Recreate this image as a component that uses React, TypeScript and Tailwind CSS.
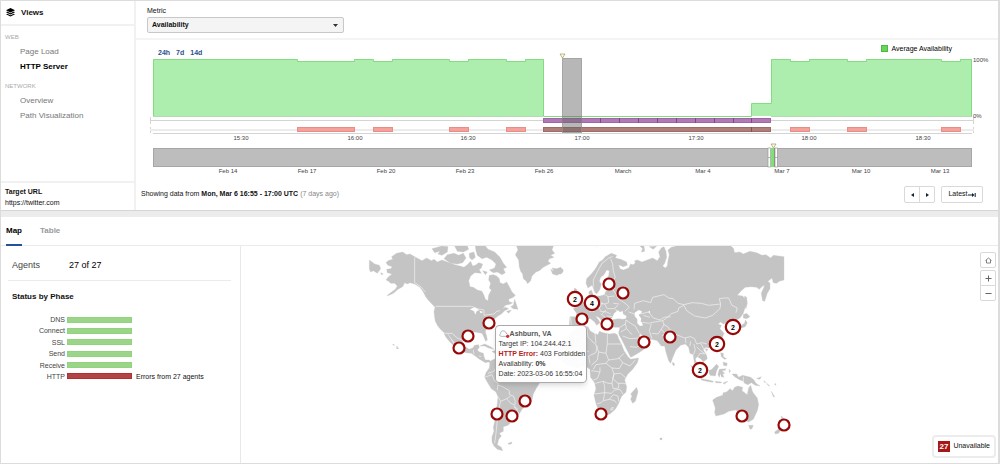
import { useState } from 'react';
import clsx from 'clsx';

const views = [
  { title: 'WEB', items: ['Page Load', 'HTTP Server'] },
  { title: 'NETWORK', items: ['Overview', 'Path Visualization'] },
];

const phases = [
  { name: 'DNS', error: '' },
  { name: 'Connect', error: '' },
  { name: 'SSL', error: '' },
  { name: 'Send', error: '' },
  { name: 'Receive', error: '' },
  { name: 'HTTP', error: 'Errors from 27 agents' },
];

const hours = [
  { x: 105, label: '15:30' },
  { x: 219, label: '16:00' },
  { x: 332, label: '16:30' },
  { x: 446, label: '17:00' },
  { x: 560, label: '17:30' },
  { x: 673, label: '18:00' },
  { x: 787, label: '18:30' },
];

const days = [
  { x: 92, label: 'Feb 14' },
  { x: 171, label: 'Feb 17' },
  { x: 250, label: 'Feb 20' },
  { x: 329, label: 'Feb 23' },
  { x: 408, label: 'Feb 26' },
  { x: 487, label: 'March' },
  { x: 567, label: 'Mar 4' },
  { x: 646, label: 'Mar 7' },
  { x: 725, label: 'Mar 10' },
  { x: 804, label: 'Mar 13' },
];

const alerts = [
  [161, 57],
  [237, 19],
  [313, 19],
  [370, 19],
  [654, 19],
  [711, 19],
  [805, 19],
];

const markers = [
  { x: 248, y: 76 },
  { x: 227, y: 89 },
  { x: 218, y: 101 },
  { x: 284, y: 154 },
  { x: 256, y: 167 },
  { x: 271, y: 169 },
  { x: 368, y: 37 },
  { x: 382, y: 46 },
  { x: 341, y: 72 },
  { x: 366, y: 77 },
  { x: 403, y: 95 },
  { x: 429, y: 90 },
  { x: 360, y: 167 },
  { x: 501, y: 169 },
  { x: 543, y: 178 },
  { x: 334, y: 52, count: 2 },
  { x: 351, y: 56, count: 4 },
  { x: 492, y: 80, count: 2 },
  { x: 476, y: 97, count: 2 },
  { x: 459, y: 123, count: 2 },
];

const americas = [
  // mainland
  'M164 50L150 42 140 44 128 36 110 40 95 50 98 58 84 62 78 68 84 76 97 80 92 86 80 88 82 98 96 102 84 112 78 120 86 124 92 130 104 130 112 138 106 148 84 164 82 168 100 160 114 148 128 140 134 128 142 132 150 128 164 132 180 142 190 156 198 172 208 184 218 194 225 202 222 215 224 232 226 244 232 256 240 266 250 276 258 292 268 304 278 314 282 312 272 296 264 284 262 279 270 290 282 306 290 320 300 332 318 338 334 340 346 348 356 356 366 362 376 368 384 366 394 368 388 360 376 360 372 350 370 340 358 336 352 330 358 322 356 314 344 316 338 324 328 328 316 320 308 306 306 296 308 290 318 282 330 276 345 276 356 278 366 280 372 292 377 304 382 300 380 288 376 276 380 262 394 248 402 238 414 228 424 222 434 212 446 206 436 202 428 206 436 196 452 192 458 188 448 186 446 178 460 172 466 166 456 156 448 140 440 126 430 132 420 128 418 116 410 108 400 104 388 106 386 120 392 130 388 144 394 150 386 166 384 182 376 178 372 166 366 154 352 150 340 142 330 140 326 122 332 108 344 98 352 92 364 84 368 72 356 68 346 76 338 78 332 64 322 74 312 82 300 78 284 74 262 66 246 60 232 66 222 58 214 62 200 54 186 62Z',
  'M216 26L232 22 246 18 264 20 262 36 246 46 234 42 240 34 224 38Z',
  'M252 56L262 44 282 40 296 46 310 40 318 54 308 68 292 72 272 70Z',
  'M284 18L322 18 326 28 310 36 292 34Z M328 40L342 36 346 52 336 60 328 52Z',
  'M346 18L376 18 384 28 404 36 420 52 430 70 440 82 430 86 436 98 426 104 412 96 400 98 388 90 404 84 408 72 396 60 380 52 366 56 352 46 348 32Z',
  'M338 84L356 86 364 100 346 98Z M368 92L382 96 376 104Z',
  'M464 178L474 208 460 206 452 200 460 196Z M440 214L454 210 446 220Z',
  'M28 60L44 72 58 76 62 86 52 100 40 92 32 96 28 88Z M62 98L70 102 64 104Z',
  'M360 318L374 312 392 320 402 328 386 324 374 318Z M396 334L412 330 420 336 404 340Z',
  'M110 318L116 326 110 326Z M100 312L104 316 98 315Z',
  // greenland and iceland
  'M470 18L474 30 466 44 476 60 478 80 482 94 488 102 490 116 498 122 503 131 512 122 516 108 528 96 538 92 550 82 572 70 564 64 568 56 582 52 572 46 584 40 576 30 580 18Z',
  'M572 88L582 94 576 84 590 86 602 82 610 90 604 100 590 106 578 102Z',
  // south america
  'M390 364L388 384 378 398 374 412 384 430 394 446 408 456 414 470 412 490 408 520 404 545 400 562 402 574 396 590 396 606 402 618 412 628 428 632 424 622 412 614 416 598 424 588 418 580 430 574 430 560 444 556 450 550 446 544 460 540 468 534 478 522 486 508 494 500 508 496 516 480 520 462 528 446 538 430 534 412 500 400 484 384 450 366 410 354Z',
  'M444 610L456 606 454 612 446 613Z',
];

const eastern = [
  // europe and asia
  'M78 130L80 116 96 100 108 84 118 66 128 60 136 50 154 40 170 46 166 54 182 58 200 66 202 76 190 80 176 74 180 86 190 90 206 84 212 72 220 74 226 68 224 62 232 60 246 66 262 60 278 54 292 62 300 50 296 36 304 24 312 20 318 34 320 52 314 70 308 78 316 84 322 78 324 62 328 44 324 30 334 22 350 18 512 18 520 24 524 38 540 36 550 42 570 34 590 38 606 46 618 44 632 54 640 46 672 50 672 120 658 124 650 130 640 128 636 114 624 124 630 130 630 146 622 160 614 184 608 182 604 160 610 146 614 136 608 138 598 148 590 142 574 140 556 142 544 152 532 166 548 168 556 178 556 200 550 220 540 234 526 242 524 252 532 266 526 276 516 268 512 256 504 246 490 252 482 246 474 252 484 256 480 266 492 280 486 296 476 308 462 318 446 324 436 322 430 330 440 346 442 356 430 366 422 356 412 350 406 356 410 370 418 386 424 398 416 396 406 380 402 362 400 344 390 340 386 322 376 312 362 316 348 330 340 348 332 370 326 362 318 336 314 318 304 318 292 302 276 298 262 300 250 290 240 280 238 288 246 300 258 302 266 312 254 326 240 336 220 348 212 352 206 340 196 320 186 300 178 286 176 278 180 262 164 262 150 260 148 252 154 240 174 236 188 238 198 236 200 228 190 222 188 212 180 216 174 210 162 220 156 234 148 240 142 246 144 256 138 262 130 246 116 232 106 228 116 240 120 248 110 256 104 246 92 236 84 236 74 242 66 252 58 262 40 262 28 256 30 230 48 230 50 220 40 206 56 198 70 186 84 178 90 168 86 156 94 150 98 160 100 168 120 168 134 164 136 156 144 150 160 146 150 144 138 144 132 132 136 118 146 108 148 92 140 90 132 104 122 112 118 124 124 132 120 148 110 162 104 156 100 144 96 136 84 144Z',
  // africa
  'M20 300L34 274 60 262 84 260 90 272 102 280 114 284 118 274 130 278 148 282 164 280 172 284 176 296 184 312 192 332 204 350 212 358 236 354 232 368 218 388 202 404 194 420 200 440 198 456 184 470 176 490 166 508 150 522 136 526 124 528 116 512 108 490 102 466 108 446 104 428 92 412 90 388 76 378 50 384 20 376 -10 350 -8 320Z',
  'M212 462L230 442 234 456 226 484 218 490 212 478 216 468Z',
  'M42 196L48 178 40 158 44 144 50 148 56 170 64 188 60 196Z M28 186L28 172 38 170 38 184Z',
  'M110 18L112 18Z M240 18L252 18 254 34 244 36 248 26Z M268 20L290 18 280 28Z M0 86L10 92 6 100 0 102Z',
  // east asian islands
  'M554 168L560 172 562 190 558 206 554 194Z M550 224L560 220 570 230 560 236 550 234Z M556 240L562 248 556 260 544 264 530 272 526 268 544 256 554 250Z M520 272L530 272 528 282 522 280Z',
  'M480 324L488 318 486 332Z M436 326L444 328 440 334Z M482 338L490 340 490 350 500 356 494 358 484 350Z M490 366L502 370 500 378 490 376Z M338 366L344 372 342 378 338 374Z',
  'M446 392L456 388 470 372 476 380 470 392 466 408 450 406Z M392 376L406 386 426 406 426 416 416 410 400 392Z M424 416L446 420 460 424 458 427 440 424 424 420Z M466 424L484 426 484 429 468 428Z M490 428L504 424 492 433Z',
  'M478 388L498 386 496 391 486 392 494 400 488 402 492 412 484 410 482 400 478 412 474 404Z M508 388L512 394 508 398Z',
  'M516 402L530 402 536 412 548 406 572 412 582 420 588 430 600 438 586 436 574 428 564 434 554 430 550 424 536 418 524 410Z M590 416L604 410 600 418Z M612 422L618 428 612 426Z',
  'M620 430L630 438 624 436Z M634 454L644 470 640 470Z M646 430L648 436 644 434Z',
  // oceania
  'M458 480L470 472 488 466 490 458 500 456 510 446 518 452 524 442 534 438 548 442 546 452 562 464 566 444 572 436 578 456 592 474 596 494 592 512 580 538 566 546 556 542 550 532 540 516 526 510 506 514 492 522 468 528 464 518 466 504Z',
  'M566 556L580 556 576 566 570 568Z M664 528L670 534 684 548 676 560 666 548Z M644 576L652 570 664 560 664 568 656 580 646 582Z M300 594L306 594 306 599 300 599Z',
];

const borders = [
  // americas
  'M164 52L164 128 182 140 196 156M226 199L335 199 352 206 372 210 372 226 384 224 402 222 410 214 420 212M238 272L256 280 276 280 292 294 306 300M340 330L342 342M356 348L364 350M384 400L402 394 410 378M374 412L396 404 404 424 414 430 412 450M414 436L428 440 448 452 448 464 460 468 466 484 464 500 474 508M414 470L422 484 440 476 452 468M422 484L416 510 412 540 408 580 404 610M440 476L452 490 462 494M462 500L472 512 478 522',
  // europe
  'M700 142L700 120 712 96 726 70 746 54 758 50M752 56L758 72 760 92 766 112 758 124M758 148L768 162 774 176 796 190 808 202 794 214M736 164L744 170 764 168M744 170L746 188 734 192 720 190M712 170L714 184 728 190 718 204 704 202M734 192L742 206 762 206 774 196M718 204L722 214 740 216 752 222M738 210L726 222M688 196L682 206 690 214 704 214M740 228L758 230M632 232L634 258M648 230L670 236M690 176L684 192M760 190L778 192M766 206L772 216M722 222L736 232 732 242M752 150L766 144',
  // central asia and the middle east
  'M806 216L824 222M822 208L824 190 850 182 872 188 878 172 912 164 926 174 940 176 954 190 972 194 996 188 1024 190 1046 196 1082 192 1078 176 1094 174 1106 174 1116 196 1132 204 1128 218M972 196L980 212 1004 228 1036 234 1058 226 1080 206 1082 192M972 196L956 204 954 214 932 222 918 236 908 242 912 254 926 262 930 276 950 284 974 294 992 290 1004 296 1010 312 1026 308 1040 312M842 222L866 216 880 234 900 240 912 232 932 230M842 246L866 250 884 246 908 242M870 232L850 226M874 252L868 272 876 296M876 280L894 282 904 268 912 254M904 268L918 284 910 302M780 262L796 252 798 240 812 250 826 258 838 280M796 252L800 266 816 284M782 276L800 266M788 288L810 296 838 294M810 320L830 322 848 308M1104 254L1116 246 1122 238M976 294L978 310M992 304L990 318M1002 312L1006 330 1000 344M1010 320L1022 332 1036 342M1022 310L1034 330 1042 344M1014 350L1020 340 1034 342M906 288L934 268',
  // africa
  'M680 262L684 292 712 318 708 338 686 348 690 370M704 270L708 310M742 282L742 312 784 312M742 312L738 340 716 336 708 316M738 340L746 360 776 356 792 340M716 336L712 360 694 376M746 360L738 370 708 374 700 388M738 370L756 384 778 386 788 368 810 378 826 360M788 368L776 352M694 392L720 396 720 382M720 396L712 416 700 420M756 384L762 402 756 430 744 430 730 424 706 430M762 402L782 400 800 416M762 402L758 416 774 430 790 430 798 432M756 430L760 446 776 444 776 430M730 424L734 440 734 458 704 462M734 458L754 460 764 450 780 448 790 464M734 458L730 482 720 490 712 490M730 482L748 478 760 464 774 468 776 484M748 478L764 482 770 490M634 262L648 290 680 304M650 330L686 334M660 378L664 340',
  'M754 504L760 502 758 510 752 510Z M1150 410L1150 430',
];

const WorldMap = () => (
  <svg
    viewBox="0 -1 757 216"
    className="block h-[216px] w-full"
    role="img"
    aria-label="Agent locations"
  >
    <g transform="translate(119 -7) scale(.3333)">
      <g fill="#c4c4c4" stroke="#c4c4c4" strokeWidth="1" strokeLinejoin="round">
        {americas.map((d) => (
          <path key={d} d={d} />
        ))}
        <g transform="translate(600 0)">
          {eastern.map((d) => (
            <path key={d} d={d} />
          ))}
        </g>
      </g>
      {/* inland seas */}
      <path
        fill="#fff"
        d="M824 218L836 210 846 214 844 220 836 224 844 236 842 244 850 256 840 258 832 250 832 238 824 228ZM864 216L870 212 870 220ZM330 208L344 202 358 210 350 214 346 224 342 214ZM358 212L370 216 362 220Z"
      />
      <g fill="none" stroke="#f4f4f4" strokeWidth="2" strokeLinejoin="round">
        {borders.map((d) => (
          <path key={d} d={d} />
        ))}
      </g>
    </g>
    {markers.map(({ x, y, count }) => (
      <g key={`${x}-${y}`}>
        <circle cx={x} cy={y} r={count ? 7.2 : 5.5} fill="#fff" stroke="#990808" strokeWidth="2.2" />
        {count && (
          <text x={x} y={y + 3} textAnchor="middle" className="fill-black text-[7px] font-bold">
            {count}
          </text>
        )}
      </g>
    ))}
  </svg>
);

const AvailabilityChart = () => (
  <svg viewBox="0 0 862 120" className="block w-full overflow-visible" role="img" aria-label="Average availability">
    <path
      d="M17 2H161V4H218V2H237V4H256V2H313V4H332V2H370V4H389V2H408V59H616V47H635V2H654V4H673V2H711V4H730V2H805V4H824V2H836V59H17Z"
      fill="#adeeae"
    />
    <path
      d="M17.5 59V2.5H161.5V4.5H218.5V2.5H237.5V4.5H256.5V2.5H313.5V4.5H332.5V2.5H370.5V4.5H389.5V2.5H407.5V59.5H615.5V46.5H635.5V2.5H654.5V4.5H673.5V2.5H711.5V4.5H730.5V2.5H805.5V4.5H824.5V2.5H835.5V59"
      fill="none"
      stroke="#82dc80"
    />
    <path d="M17 59.5H408M635 59.5H836" stroke="#b5d9b5" />
    <path d="M14 63.5H838M17 76.5H836M14.5 60V67M14.5 70V76M837.5 60V67M837.5 70V76" stroke="#d4d4d4" />
    <path d="M14 73H838" stroke="#ececec" strokeWidth="2" />
    {alerts.map(([x, width]) => (
      <rect key={x} x={x + 0.5} y="70.5" width={width} height="4" fill="#f3a39b" stroke="#ea8d86" />
    ))}
    <rect x="407.5" y="61.5" width="227" height="4" fill="#b07ab4" stroke="#a265a8" />
    <path
      d="M426.5 61V66M445.5 61V66M464.5 61V66M483.5 61V66M502.5 61V66M521.5 61V66M540.5 61V66M559.5 61V66M578.5 61V66M597.5 61V66M615.5 61V66"
      stroke="#87418f"
    />
    <rect x="407.5" y="70.5" width="227" height="4" fill="#b07e78" stroke="#a06b66" />
    <path d="M615.5 70V75" stroke="#84504c" />
    {/* selected round */}
    <rect x="426.5" y="1.5" width="19" height="74" fill="#666" fillOpacity="0.47" stroke="#8e8e8e" strokeOpacity="0.7" />
    <path d="M424 -3H429L426.5 1Z" fill="#ffffd8" stroke="#999866" strokeWidth="0.7" />
    <g className="fill-[#444] text-[6px]">
      <text x="837" y="5">100%</text>
      <text x="837" y="61">0%</text>
      {hours.map(({ x, label }) => (
        <text key={label} x={x} y="83" textAnchor="middle">
          {label}
        </text>
      ))}
      {days.map(({ x, label }) => (
        <text key={label} x={x} y="116" textAnchor="middle">
          {label}
        </text>
      ))}
    </g>
    <rect x="17.5" y="91.5" width="818" height="18" fill="#bdbdbd" stroke="#a6a6a6" />
    <rect x="632" y="91" width="9" height="19" fill="#fff" />
    <rect x="635" y="91" width="3" height="19" fill="#7be36f" />
    <path d="M638.5 91V110" stroke="#888" />
    <g fill="#fff" stroke="#999" strokeWidth="0.7">
      <rect x="632" y="91" width="2.5" height="19" />
      <rect x="639" y="91" width="2.5" height="19" />
      <path d="M632 100.5H634.5M639 100.5H641.5" />
    </g>
    <path d="M635 87H640L637.5 91Z" fill="#ffffd8" stroke="#999866" strokeWidth="0.7" />
  </svg>
);

const LayersIcon = () => (
  <svg viewBox="0 0 18 18" className="size-[9px]" aria-hidden="true">
    <path d="M9 0L18 4.5 9 9 0 4.5Z" />
    <path d="M0 8.5L2.5 7.2 9 10.5 15.5 7.2 18 8.5 9 13Z" />
    <path d="M0 12.7L2.5 11.4 9 14.7 15.5 11.4 18 12.7 9 17.2Z" />
  </svg>
);

const Sidebar = () => (
  <nav className="flex w-[135px] shrink-0 flex-col border-r-2 border-[#f1f1f1]">
    <h1 className="flex h-[25px] items-center gap-[6px] border-b-2 border-[#f1f1f1] px-[5px] text-[8px] font-bold">
      <LayersIcon />
      Views
    </h1>
    <div className="flex flex-1 flex-col gap-2 pt-[7px]">
      {views.map(({ title, items }) => (
        <div key={title}>
          <h2 className="mb-[3px] px-1 text-[6px] leading-[8px] text-[#aaa]">{title}</h2>
          <ul>
            {items.map((item) => (
              <li key={item} className="pl-[19px] text-[8px] leading-[15px]">
                <a
                  href="#"
                  className={item === 'HTTP Server' ? 'font-bold text-black' : 'text-[#777]'}
                >
                  {item}
                </a>
              </li>
            ))}
          </ul>
        </div>
      ))}
    </div>
    <div className="border-t-2 border-[#f1f1f1] px-1 pt-[3px] pb-[2px] text-[7px] leading-[11px]">
      <p className="font-bold">Target URL</p>
      <p>https://twitter.com</p>
    </div>
  </nav>
);

const buttonStyle = 'border border-[#d9d9d9] bg-white flex items-center justify-center';

const Timeline = () => (
  <section className="flex min-w-0 flex-1 flex-col">
    <div className="border-b-2 border-[#f4f4f4] px-[11px] pt-[6px] pb-[5px]">
      <label htmlFor="metric" className="mb-[2px] block text-[7px] leading-[8px]">
        Metric
      </label>
      <div className="relative w-[197px]">
        <select
          id="metric"
          className="block h-4 w-full appearance-none rounded-xs border border-[#c8c8c8] bg-[#f4f4f4] px-1 text-[7px] font-bold"
        >
          <option>Availability</option>
        </select>
        <svg viewBox="0 0 5 3" className="pointer-events-none absolute top-[7px] right-[6px] h-[3px] w-[5px]">
          <path d="M0 0H5L2.5 3Z" fill="#333" />
        </svg>
      </div>
    </div>
    <div className="flex h-[17px] justify-between pr-[46px] pl-[22px] text-[7px] leading-[9px]">
      <div className="flex items-end gap-[6px] font-bold text-[#2a4f8f]">
        <button>24h</button>
        <button>7d</button>
        <button>14d</button>
      </div>
      <div className="flex items-center gap-[4px] text-black">
        <span className="size-[7px] border border-[#4cb944] bg-[#66d65b]" />
        Average Availability
      </div>
    </div>
    <AvailabilityChart />
    <div className="flex flex-1 items-center justify-between pt-[2px] pr-[15px] pl-[5px] text-[7px]">
      <p>
        Showing data from <b>Mon, Mar 6 16:55 - 17:00 UTC</b>{' '}
        <span className="text-[#888]">(7 days ago)</span>
      </p>
      <div className="flex h-[17px] gap-[6px]">
        <div className="flex">
          <button aria-label="Previous round" className={clsx(buttonStyle, 'w-4 rounded-l-xs')}>
            <svg viewBox="0 0 3 4" className="h-1 w-[3px]">
              <path d="M3 0V4L0 2Z" fill="#123" />
            </svg>
          </button>
          <button aria-label="Next round" className={clsx(buttonStyle, '-ml-px w-4 rounded-r-xs')}>
            <svg viewBox="0 0 3 4" className="h-1 w-[3px]">
              <path d="M0 0V4L3 2Z" fill="#123" />
            </svg>
          </button>
        </div>
        <button className={clsx(buttonStyle, 'w-[42px] rounded-xs')}>
          Latest
          <svg viewBox="0 0 8 6" className="h-[6px] w-2">
            <path d="M0 2.5H4V1L6.5 3 4 5V3.5H0ZM6.7 1H7.7V5H6.7Z" fill="#123" />
          </svg>
        </button>
      </div>
    </div>
  </section>
);

const Summary = () => (
  <aside className="w-[240px] shrink-0 border-r border-[#e8e8e8] pr-[9px] pl-[7px]">
    <div className="flex h-[35px] items-center border-b border-[#ebebeb] pt-[5px] pl-1 text-[9px]">
      <span className="w-[57px] text-[#444]">Agents</span>
      <span className="text-black">27 of 27</span>
    </div>
    <h2 className="mt-[11px] mb-[14px] pl-1 text-[8px] leading-[10px] font-bold">Status by Phase</h2>
    <dl className="flex h-[64px] flex-col justify-between text-[7px] leading-[7px]">
      {phases.map(({ name, error }) => (
        <div key={name} className="flex items-center">
          <dt className="w-[57px] text-right text-[#444]">{name}</dt>
          <dd className="flex items-center gap-1 pl-[2px]">
            <span
              className={clsx(
                'h-[6px] w-[65px] border',
                error ? 'border-[#b52e2e] bg-[#af4544]' : 'border-[#90d47c] bg-[#9cd489]'
              )}
            />
            {error}
          </dd>
        </div>
      ))}
    </dl>
  </aside>
);

const AgentTooltip = () => (
  <div className="absolute top-[79px] left-[33.5%] rounded-sm border border-[#aaa] bg-white/95 py-[3px] pr-px pl-[3px] text-[7px] leading-[10px] whitespace-nowrap text-[#333] shadow-md">
    <p className="flex items-center font-bold text-[#555]">
      <svg viewBox="0 0 33 24" className="h-2 w-[11px]" aria-hidden="true">
        <path
          d="M7 19C1 19 0 13 5 11 4 4 10 1 15 3 20 4 21 7 21 10 26 10 28 15 25 19Z"
          fill="#fff"
          stroke="#8795a0"
          strokeWidth="2"
        />
        <circle cx="26" cy="19" r="5" fill="#d42a2a" />
      </svg>
      Ashburn, VA
    </p>
    <p>Target IP: 104.244.42.1</p>
    <p>
      <b className="text-[#b52020]">HTTP Error:</b> 403 Forbidden
    </p>
    <p>
      Availability: <b>0%</b>
    </p>
    <p>Date: 2023-03-06 16:55:04</p>
  </div>
);

const MapControls = () => (
  <div className="absolute top-[6px] right-[2px] flex w-4 flex-col text-[#666]">
    <button aria-label="Reset map" className={clsx(buttonStyle, 'mb-[2px] h-4 rounded-xs')}>
      <svg viewBox="0 0 14 14" className="size-[7px]" fill="none" stroke="currentColor" strokeWidth="1.6">
        <path d="M1 7L7 2 13 7M3 6V12H11V6" />
      </svg>
    </button>
    <button aria-label="Zoom in" className={clsx(buttonStyle, 'h-4 rounded-t-xs')}>
      <svg viewBox="0 0 7 7" className="size-[7px]" stroke="currentColor">
        <path d="M.5 3.5H6.5M3.5 .5V6.5" />
      </svg>
    </button>
    <button aria-label="Zoom out" className={clsx(buttonStyle, '-mt-px h-4 rounded-b-xs')}>
      <svg viewBox="0 0 7 7" className="size-[7px]" stroke="currentColor">
        <path d="M.5 3.5H6.5" />
      </svg>
    </button>
  </div>
);

const App = () => {
  const [tab, setTab] = useState('Map');

  return (
    <div className="flex min-h-screen flex-col border border-r-2 border-[#dcdcdc] bg-white font-['Liberation_Sans',Arial,sans-serif] text-[#111]">
      <div className="flex min-h-[209px]">
        <Sidebar />
        <Timeline />
      </div>
      <div className="h-[7px] border-t border-[#d6d6d6] bg-[#ececec]" />
      <div className="flex h-[29px] gap-[18px] border-b border-[#ebebeb] px-[5px] text-[8px] font-bold">
        {['Map', 'Table'].map((name) => (
          <button
            key={name}
            onClick={() => setTab(name)}
            className={clsx(
              '-mb-px border-b-2 pt-px',
              tab === name ? 'border-[#27509b] text-black' : 'border-transparent text-[#999]'
            )}
          >
            {name}
          </button>
        ))}
      </div>
      <main className="flex flex-1">
        <Summary />
        <section className="relative min-w-0 flex-1">
          <WorldMap />
          <AgentTooltip />
          <MapControls />
          <div className="absolute right-[2px] bottom-[5px] flex h-[23px] items-center gap-[3px] rounded-sm border-2 border-[#ececec] bg-white px-1 text-[7px]">
            <span className="bg-[#a81717] px-[2px] text-[8px] leading-[11px] font-bold text-white">27</span>
            Unavailable
          </div>
        </section>
      </main>
    </div>
  );
};

export default App;
